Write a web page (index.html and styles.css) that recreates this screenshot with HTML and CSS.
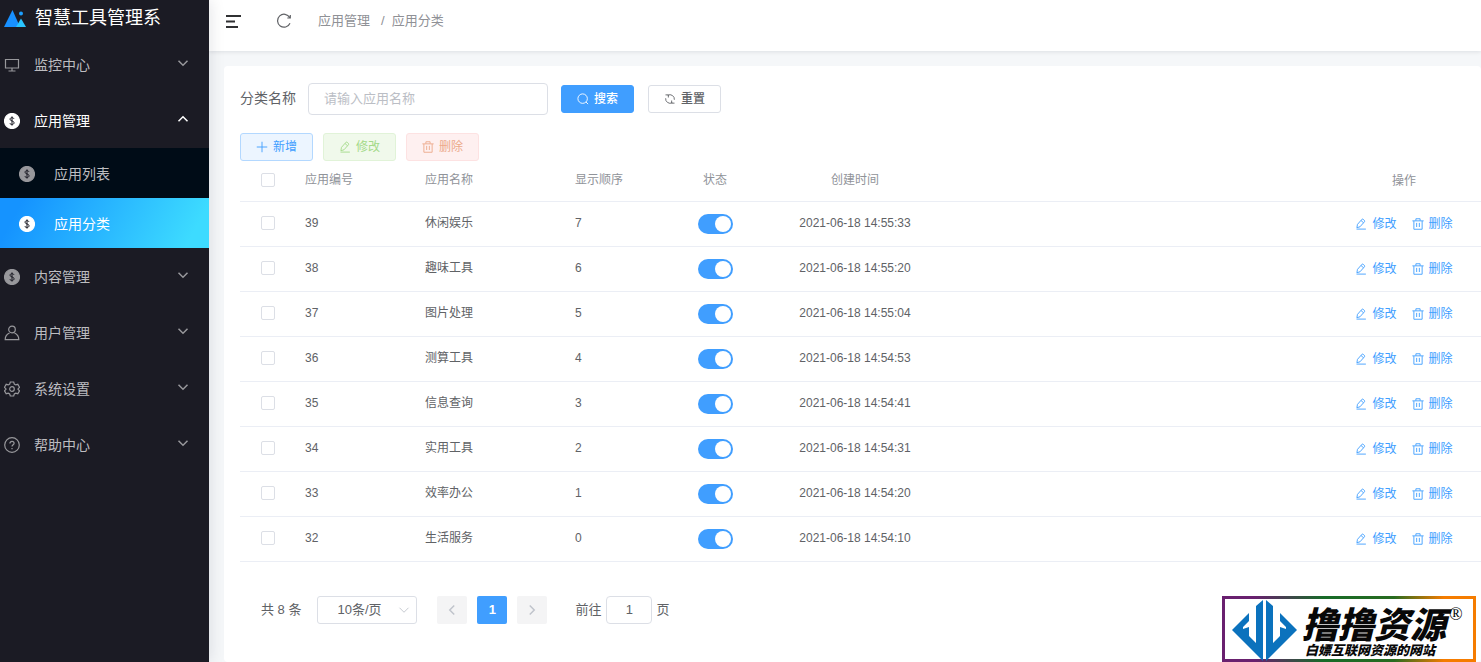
FILE: index.html
```
<!DOCTYPE html>
<html lang="zh-CN">
<head>
<meta charset="utf-8">
<title>智慧工具管理系</title>
<link rel="stylesheet" href="styles.css">
</head>
<body>
<svg class="sprite" aria-hidden="true">
  <symbol id="coin" viewBox="0 0 16 16"><circle cx="8" cy="8" r="7.5" fill="currentColor"/><path class="coin-mark" d="M10 5.800C9.700 5 9 4.700 8 4.700c-1.200 0-2 .6-2 1.500C6 8.400 10.100 7.500 10.100 9.800c0 .9-.9 1.600-2.100 1.600S6 10.900 5.800 10M8 3.400v9.200"/></symbol>
  <symbol id="down" viewBox="0 0 16 16"><path d="M2 5l6 6 6-6"/></symbol>
  <symbol id="edit" viewBox="0 0 16 16"><path d="M2.500 13l.8-4.500L9.200 1.800q.8-.8 1.700 0l1.600 1.400q.9.900.1 1.800L6.700 11.700zM8 3.300l3.300 3M2 14.800h12.500"/></symbol>
  <symbol id="trash" viewBox="0 0 16 16"><path d="M.5 3.800h15M5.200 3.500V1h5.600v2.500M2.500 4v11h11V4M6.200 6.500v5.500M9.800 6.500v5.500"/></symbol>
</svg>
<div class="app">
  <aside class="sidebar">
    <div class="brand">
      <svg class="brand-logo" viewBox="0 0 24 20"><path d="M1 19L9.500 2 17 19z" fill="#1890ff"/><path d="M13 19l5-8.500 5 8.500z" fill="#29c5ff"/><circle cx="18" cy="5.500" r="2" fill="#1c9fff"/></svg>
      <h1>智慧工具管理系</h1>
    </div>
    <nav>
      <a class="item" href="#"><svg class="icon" viewBox="0 0 16 16"><path d="M1.500 2.500h13v8.500h-13zM8 11v3M4.500 14h7"/></svg><span>监控中心</span><svg class="arrow"><use href="#down"/></svg></a>
      <a class="item open" href="#"><svg class="icon"><use href="#coin"/></svg><span>应用管理</span><svg class="arrow up"><use href="#down"/></svg></a>
      <div class="submenu">
        <a class="subitem" href="#"><svg class="icon"><use href="#coin"/></svg><span>应用列表</span></a>
        <a class="subitem active" href="#"><svg class="icon"><use href="#coin"/></svg><span>应用分类</span></a>
      </div>
      <a class="item" href="#"><svg class="icon"><use href="#coin"/></svg><span>内容管理</span><svg class="arrow"><use href="#down"/></svg></a>
      <a class="item" href="#"><svg class="icon" viewBox="0 0 16 16"><circle cx="8" cy="4.500" r="3.300"/><path d="M5.500 8C2.800 9.200 1.200 11.500 1.200 14.600h13.600c0-3.100-1.600-5.400-4.300-6.600"/></svg><span>用户管理</span><svg class="arrow"><use href="#down"/></svg></a>
      <a class="item" href="#"><svg class="icon" viewBox="0 0 16 16"><path d="M6.300 1h3.400l.6 2.100 1.400.8 2.100-.6L15.500 6.300 14 7.900v.3l1.500 1.600-1.700 2.900-2.100-.5-1.400.8L9.700 15H6.300l-.6-2-1.400-.8-2.100.5L.5 9.800 2 8.200v-.3L.5 6.300l1.700-3 2.100.6 1.400-.8z"/><circle cx="8" cy="8" r="2.300"/></svg><span>系统设置</span><svg class="arrow"><use href="#down"/></svg></a>
      <a class="item" href="#"><svg class="icon" viewBox="0 0 16 16"><circle cx="8" cy="8" r="7.300"/><path d="M5.900 6.500c0-1.300.9-2.100 2.100-2.100s2.100.8 2.100 1.900C10.100 7.800 8 7.900 8 9.600M8 11v1.300"/></svg><span>帮助中心</span><svg class="arrow"><use href="#down"/></svg></a>
    </nav>
  </aside>
  <div class="main">
    <header class="topbar">
      <button class="bare" aria-label="折叠菜单"><svg class="fold" viewBox="0 0 16 14"><path d="M0 2h15M0 7.500h9M0 13h12"/></svg></button>
      <button class="bare" aria-label="刷新"><svg class="reload" viewBox="0 0 16 16"><path d="M13.700 4.500A6.500 6.500 0 1 0 14 10.300M14.300 2v3h-3"/></svg></button>
      <nav class="crumbs"><a href="#">应用管理</a><span>/</span><a href="#">应用分类</a></nav>
    </header>
    <main class="card">
      <form class="search">
        <label for="name">分类名称</label>
        <input id="name" class="field" type="text" placeholder="请输入应用名称">
        <button type="button" class="btn primary"><svg viewBox="0 0 16 16"><circle cx="7.500" cy="7.500" r="6.300"/><path d="M12 12l2.800 2.800"/></svg>搜索</button>
        <button type="button" class="btn reset"><svg viewBox="0 0 16 16"><path d="M5 3A6 6 0 0 1 13.800 9M2 2.500h3.800v3.500M11 13A6 6 0 0 1 2.200 7M14 13.500h-3.800V10"/></svg>重置</button>
      </form>
      <div class="tools">
        <button class="btn add"><svg viewBox="0 0 16 16"><path d="M8 1v14M1 8h14"/></svg>新增</button>
        <button class="btn modify" disabled><svg><use href="#edit"/></svg>修改</button>
        <button class="btn remove" disabled><svg><use href="#trash"/></svg>删除</button>
      </div>
      <table>
        <colgroup><col class="c-check"><col class="c-id"><col class="c-name"><col class="c-order"><col class="c-state"><col class="c-time"><col></colgroup>
        <thead><tr><th class="mid"><input type="checkbox" class="check" aria-label="全选"></th><th>应用编号</th><th>应用名称</th><th>显示顺序</th><th class="mid">状态</th><th class="mid">创建时间</th><th class="last"><span class="ops">操作</span></th></tr></thead>
        <tbody id="rows"></tbody>
      </table>
      <div class="pager">
        <span class="total">共 8 条</span>
        <span class="size"><select aria-label="每页条数"><option>10条/页</option></select><svg><use href="#down"/></svg></span>
        <button class="page" disabled aria-label="上一页"><svg class="prev"><use href="#down"/></svg></button>
        <button class="page current">1</button>
        <button class="page" disabled aria-label="下一页"><svg class="next"><use href="#down"/></svg></button>
        <label class="jump">前往<input type="text" value="1">页</label>
      </div>
    </main>
  </div>
</div>
<div class="stamp">
  <svg class="stamp-logo" viewBox="0 0 66 62"><path fill="#0b72bd" d="M0 31L17 14v8l-6 6v2l6-2v9l7 7V7l7-6v61zM65 31L48 14v8l6 6v2l-6-2v9l-7 7V7l-7-6v61z"/></svg>
  <div class="stamp-text"><strong>撸撸资源</strong><em>白嫖互联网资源的网站</em></div>
  <span class="reg">®</span>
</div>
<script src="app.js"></script>
</body>
</html>
```
FILE: styles.css
```
* { box-sizing: border-box; }
body { margin: 0; font: 13px/20px "Liberation Sans", "Noto Sans CJK SC", sans-serif; color: #606266; background: #f5f7f9; overflow: hidden; }
a { color: inherit; text-decoration: none; }
button, input, select { font: inherit; color: inherit; margin: 0; }
svg { fill: none; stroke: currentColor; stroke-width: 1.2; flex: none; }
.sprite { position: absolute; width: 0; height: 0; }
.app { display: flex; min-height: 100vh; }

.sidebar { flex: none; width: 209px; background: #1b1b24; color: #bdbdc0; box-shadow: 2px 0 14px rgba(0, 21, 41, .1); z-index: 2; }
.brand { display: flex; align-items: center; gap: 8px; height: 36px; padding-left: 3px; }
.brand-logo { width: 24px; height: 20px; stroke: none; }
.brand h1 { margin: 0; font-size: 18px; line-height: 36px; font-weight: 400; color: #fff; }
.item { display: flex; align-items: center; height: 56px; padding: 2px 20px 0 4px; font-size: 14px; }
.icon { width: 16px; height: 16px; color: #98989c; }
.item span { flex: 1; margin-left: 14px; }
.arrow { width: 12px; height: 12px; margin-bottom: 4px; stroke-width: 2; color: #98989c; }
.arrow.up { transform: rotate(180deg); }
.item.open, .item.open svg, .subitem.active, .subitem.active .icon { color: #fff; }
.coin-mark { stroke: #1b1b24; stroke-width: 1; }
.submenu { background: #000c17; }
.subitem { display: flex; align-items: center; gap: 19px; height: 50px; padding: 2px 0 0 19px; font-size: 14px; }
.active { background: linear-gradient(118deg, #1593ff 10%, #3ddbff 90%); }

.main { flex: 1; min-width: 0; }
.topbar { display: flex; align-items: center; height: 51px; padding: 0 0 10px 17px; background: #fff; box-shadow: 0 1px 4px rgba(0, 21, 41, .1); color: #8f9196; }
.bare { padding: 0; border: 0; background: none; display: flex; color: #303133; }
.fold { width: 16px; height: 14px; stroke-width: 2; }
.reload { width: 16px; height: 16px; margin: 0 26px 0 34px; color: #606266; }
.crumbs { display: flex; }
.crumbs span { margin: 0 7px 0 11px; }
.card { margin: 15px 0 0 15px; padding: 17px 0 0 16px; min-height: calc(100vh - 66px); background: #fff; border-radius: 4px; }

.search { display: flex; align-items: center; }
.search label { font-size: 14px; margin-right: 12px; padding-bottom: 2px; }
.field { width: 240px; height: 32px; padding: 0 15px 2px; border: 1px solid #dcdfe6; border-radius: 4px; margin-right: 13px; }
.field::placeholder { color: #bbbec5; }
.btn { display: flex; align-items: center; justify-content: center; gap: 5px; width: 73px; height: 28px; padding: 0; border: 1px solid #dcdfe6; border-radius: 3px; background: #fff; font-size: 12px; }
.btn svg { width: 12px; height: 12px; }
.primary { background: #409eff; border-color: #409eff; color: #fff; font-weight: 500; }
.reset { margin-left: 14px; font-weight: 500; }
.tools { display: flex; gap: 10px; margin-top: 18px; }
.add { background: #ecf5ff; border-color: #b3d8ff; color: #409eff; }
.modify { background: #f0f9eb; border-color: #e1f3d8; color: #a4da89; }
.remove { background: #fef0f0; border-color: #fde2e2; color: #eca98a; }

table { width: 100%; table-layout: fixed; border-collapse: collapse; font-size: 12px; }
.c-check { width: 55px; } .c-id { width: 120px; } .c-name { width: 150px; }
.c-order, .c-state { width: 100px; } .c-time { width: 180px; }
th { height: 40px; padding: 0 10px 1px; font-weight: 400; color: #909399; text-align: left; border-bottom: 1px solid #ebeef5; }
td { height: 45px; padding: 0 10px 2px; border-bottom: 1px solid #ebeef5; }
.mid { text-align: center; }
.check { appearance: none; display: block; width: 14px; height: 14px; margin: 0 auto; border: 1px solid #dcdfe6; border-radius: 2px; background: #fff; }
.switch { appearance: none; display: block; width: 35px; height: 20px; margin: 2px auto 0; padding: 2px; border-radius: 10px; background: #409eff; }
.switch::before { content: ""; display: block; width: 16px; height: 16px; margin-left: 15px; border-radius: 50%; background: #fff; }
.last { text-align: right; padding-right: 28px; padding-bottom: 0; }
.ops { display: inline-flex; justify-content: center; gap: 15px; width: 98px; vertical-align: middle; }
.link { display: flex; align-items: center; gap: 5px; padding: 0; border: 0; background: none; color: #409eff; }
.link svg { width: 12px; height: 12px; }

.pager { display: flex; align-items: center; margin: 34px 0 0 21px; padding-bottom: 20px; }
.size { display: flex; align-items: center; margin: 0 20px 0 16px; width: 100px; }
.size select { appearance: none; width: 100px; height: 28px; padding: 0 24px 0 19px; border: 1px solid #dcdfe6; border-radius: 3px; background: #fff; }
.size svg { width: 12px; height: 12px; margin-left: -19px; color: #c0c4cc; pointer-events: none; }
.page { display: flex; align-items: center; justify-content: center; width: 30px; height: 28px; margin-right: 10px; padding: 0; border: 0; border-radius: 2px; background: #f4f4f5; color: #c0c4cc; }
.page svg { width: 12px; height: 12px; stroke-width: 2; }
.prev { transform: rotate(90deg); }
.next { transform: rotate(-90deg); }
.page.current { background: #409eff; color: #fff; font-weight: 700; }
.jump { display: flex; align-items: center; margin-left: 18px; }
.jump input { width: 46px; height: 28px; margin: 0 4px 0 5px; padding: 0; border: 1px solid #dcdfe6; border-radius: 4px; text-align: center; }

.stamp { position: fixed; right: 5px; bottom: 0; z-index: 3; display: flex; width: 254px; height: 66px; padding: 0 0 0 7px; border: 3px solid; border-image: linear-gradient(90deg, #69206f 12%, #176b28 40%, #286b20 68%, #f57c00 88%) 1; background: #fff; color: #080808; }
.stamp-logo { width: 66px; height: 62px; stroke: none; }
.stamp-text { display: flex; flex-direction: column; margin-left: 4px; font-family: "Noto Sans CJK SC", sans-serif; font-style: italic; font-weight: 900; }
.stamp-text strong { font-size: 36px; line-height: 42px; font-weight: 900; margin-top: 2px; }
.stamp-text em { font-size: 13px; line-height: 14px; margin-left: 3px; white-space: nowrap; }
.reg { margin-left: 3px; font: 18px/30px "Liberation Serif", serif; }
```
FILE: app.js
```
const data = [
  [39, "休闲娱乐", 7, "2021-06-18 14:55:33"],
  [38, "趣味工具", 6, "2021-06-18 14:55:20"],
  [37, "图片处理", 5, "2021-06-18 14:55:04"],
  [36, "测算工具", 4, "2021-06-18 14:54:53"],
  [35, "信息查询", 3, "2021-06-18 14:54:41"],
  [34, "实用工具", 2, "2021-06-18 14:54:31"],
  [33, "效率办公", 1, "2021-06-18 14:54:20"],
  [32, "生活服务", 0, "2021-06-18 14:54:10"]
];
document.getElementById("rows").innerHTML = data.map(([id, name, order, time]) => `
<tr>
  <td class="mid"><input type="checkbox" class="check" aria-label="选择${name}"></td>
  <td>${id}</td><td>${name}</td><td>${order}</td>
  <td class="mid"><input type="checkbox" role="switch" class="switch" checked aria-label="${name}状态"></td>
  <td class="mid">${time}</td>
  <td class="last"><span class="ops"><button class="link"><svg><use href="#edit"/></svg>修改</button><button class="link"><svg><use href="#trash"/></svg>删除</button></span></td>
</tr>`).join("");
```
